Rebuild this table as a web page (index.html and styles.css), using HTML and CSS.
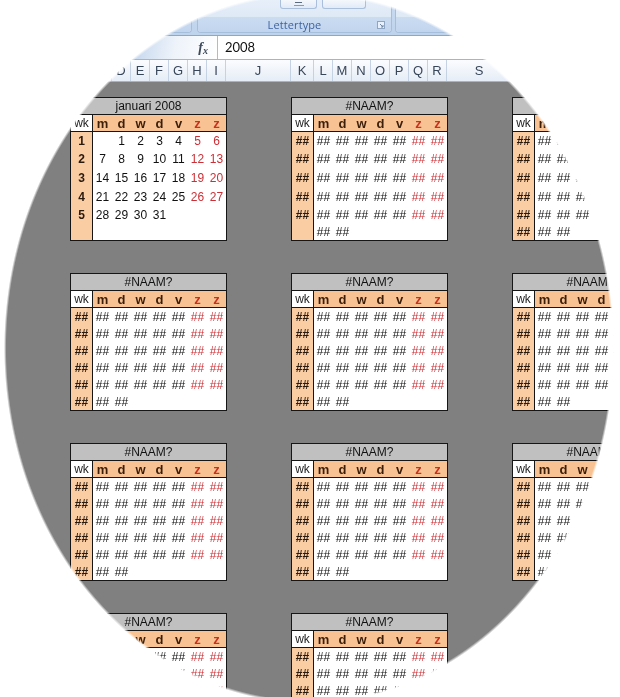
FILE: index.html
```html
<!DOCTYPE html>
<html lang="nl">
<head>
<meta charset="utf-8">
<title>Kalender 2008</title>
<link rel="stylesheet" href="styles.css">
</head>
<body>
<div class="screen">
  <div class="ribbon">
    <div class="group group-left">
      <div class="gcontent"></div>
      <div class="glabel"></div>
    </div>
    <div class="group group-font">
      <div class="gcontent">
        <div class="rbtn rbtn-a">
          <svg width="12" height="6" viewBox="0 0 12 6"><path d="M2 1.5h7" stroke="#5a6b80" stroke-width="1"/><path d="M1 4.5h10" stroke="#8a9bb0" stroke-width="1"/></svg>
        </div>
        <div class="rbtn rbtn-b"></div>
      </div>
      <div class="glabel"><span></span><span class="gname">Lettertype</span><span class="launcher"><svg width="8" height="8" viewBox="0 0 8 8"><rect x="0.5" y="0.5" width="7" height="7" fill="#e9f0f9" stroke="#8ea6c4"/><path d="M3 3l3 3M6 4v2H4" stroke="#6f87a6" fill="none"/></svg></span></div>
    </div>
    <div class="group group-right">
      <div class="gcontent"></div>
      <div class="glabel"></div>
    </div>
  </div>

  <div class="formula-bar">
    <div class="fx-area"><span class="fx">f<span class="fxx">x</span></span></div>
    <div class="formula-input">2008</div>
  </div>

  <div class="col-headers">
    <div class="ch cw-gap">A</div><div class="ch cw-wk">B</div><div class="ch">C</div><div class="ch">D</div><div class="ch">E</div><div class="ch">F</div><div class="ch">G</div><div class="ch">H</div><div class="ch">I</div>
    <div class="ch cw-gap2">J</div><div class="ch cw-wk">K</div><div class="ch">L</div><div class="ch">M</div><div class="ch">N</div><div class="ch">O</div><div class="ch">P</div><div class="ch">Q</div><div class="ch">R</div>
    <div class="ch cw-gap2">S</div><div class="ch cw-wk">T</div><div class="ch">U</div><div class="ch">V</div><div class="ch">W</div><div class="ch">X</div><div class="ch">Y</div>
  </div>

  <div class="sheet">
    <!-- band 1 -->
    <div class="band band-first">
      <div class="cal">
        <div class="cal-title">januari 2008</div>
        <div class="cal-head"><span class="wkh">wk</span><span>m</span><span>d</span><span>w</span><span>d</span><span>v</span><span class="z">z</span><span class="z">z</span></div>
        <div class="cal-body">
          <span class="k">1</span><span></span><span>1</span><span>2</span><span>3</span><span>4</span><span class="z">5</span><span class="z">6</span>
          <span class="k">2</span><span>7</span><span>8</span><span>9</span><span>10</span><span>11</span><span class="z">12</span><span class="z">13</span>
          <span class="k">3</span><span>14</span><span>15</span><span>16</span><span>17</span><span>18</span><span class="z">19</span><span class="z">20</span>
          <span class="k">4</span><span>21</span><span>22</span><span>23</span><span>24</span><span>25</span><span class="z">26</span><span class="z">27</span>
          <span class="k">5</span><span>28</span><span>29</span><span>30</span><span>31</span><span></span><span></span><span></span>
          <span class="k"></span>
        </div>
      </div>
      <div class="cal">
        <div class="cal-title">#NAAM?</div>
        <div class="cal-head"><span class="wkh">wk</span><span>m</span><span>d</span><span>w</span><span>d</span><span>v</span><span class="z">z</span><span class="z">z</span></div>
        <div class="cal-body">
          <span class="k">##</span><span>##</span><span>##</span><span>##</span><span>##</span><span>##</span><span class="z">##</span><span class="z">##</span>
          <span class="k">##</span><span>##</span><span>##</span><span>##</span><span>##</span><span>##</span><span class="z">##</span><span class="z">##</span>
          <span class="k">##</span><span>##</span><span>##</span><span>##</span><span>##</span><span>##</span><span class="z">##</span><span class="z">##</span>
          <span class="k">##</span><span>##</span><span>##</span><span>##</span><span>##</span><span>##</span><span class="z">##</span><span class="z">##</span>
          <span class="k">##</span><span>##</span><span>##</span><span>##</span><span>##</span><span>##</span><span class="z">##</span><span class="z">##</span>
          <span class="k"></span><span>##</span><span>##</span>
        </div>
      </div>
      <div class="cal">
        <div class="cal-title">#NAAM?</div>
        <div class="cal-head"><span class="wkh">wk</span><span>m</span><span>d</span><span>w</span><span>d</span><span>v</span><span class="z">z</span><span class="z">z</span></div>
        <div class="cal-body">
          <span class="k">##</span><span>##</span><span>##</span><span>##</span><span>##</span><span>##</span><span class="z">##</span><span class="z">##</span>
          <span class="k">##</span><span>##</span><span>##</span><span>##</span><span>##</span><span>##</span><span class="z">##</span><span class="z">##</span>
          <span class="k">##</span><span>##</span><span>##</span><span>##</span><span>##</span><span>##</span><span class="z">##</span><span class="z">##</span>
          <span class="k">##</span><span>##</span><span>##</span><span>##</span><span>##</span><span>##</span><span class="z">##</span><span class="z">##</span>
          <span class="k">##</span><span>##</span><span>##</span><span>##</span><span>##</span><span>##</span><span class="z">##</span><span class="z">##</span>
          <span class="k">##</span><span>##</span><span>##</span>
        </div>
      </div>
    </div>

    <!-- band 2 -->
    <div class="band">
      <div class="cal">
        <div class="cal-title">#NAAM?</div>
        <div class="cal-head"><span class="wkh">wk</span><span>m</span><span>d</span><span>w</span><span>d</span><span>v</span><span class="z">z</span><span class="z">z</span></div>
        <div class="cal-body">
          <span class="k">##</span><span>##</span><span>##</span><span>##</span><span>##</span><span>##</span><span class="z">##</span><span class="z">##</span>
          <span class="k">##</span><span>##</span><span>##</span><span>##</span><span>##</span><span>##</span><span class="z">##</span><span class="z">##</span>
          <span class="k">##</span><span>##</span><span>##</span><span>##</span><span>##</span><span>##</span><span class="z">##</span><span class="z">##</span>
          <span class="k">##</span><span>##</span><span>##</span><span>##</span><span>##</span><span>##</span><span class="z">##</span><span class="z">##</span>
          <span class="k">##</span><span>##</span><span>##</span><span>##</span><span>##</span><span>##</span><span class="z">##</span><span class="z">##</span>
          <span class="k">##</span><span>##</span><span>##</span>
        </div>
      </div>
      <div class="cal">
        <div class="cal-title">#NAAM?</div>
        <div class="cal-head"><span class="wkh">wk</span><span>m</span><span>d</span><span>w</span><span>d</span><span>v</span><span class="z">z</span><span class="z">z</span></div>
        <div class="cal-body">
          <span class="k">##</span><span>##</span><span>##</span><span>##</span><span>##</span><span>##</span><span class="z">##</span><span class="z">##</span>
          <span class="k">##</span><span>##</span><span>##</span><span>##</span><span>##</span><span>##</span><span class="z">##</span><span class="z">##</span>
          <span class="k">##</span><span>##</span><span>##</span><span>##</span><span>##</span><span>##</span><span class="z">##</span><span class="z">##</span>
          <span class="k">##</span><span>##</span><span>##</span><span>##</span><span>##</span><span>##</span><span class="z">##</span><span class="z">##</span>
          <span class="k">##</span><span>##</span><span>##</span><span>##</span><span>##</span><span>##</span><span class="z">##</span><span class="z">##</span>
          <span class="k">##</span><span>##</span><span>##</span>
        </div>
      </div>
      <div class="cal">
        <div class="cal-title">#NAAM?</div>
        <div class="cal-head"><span class="wkh">wk</span><span>m</span><span>d</span><span>w</span><span>d</span><span>v</span><span class="z">z</span><span class="z">z</span></div>
        <div class="cal-body">
          <span class="k">##</span><span>##</span><span>##</span><span>##</span><span>##</span><span>##</span><span class="z">##</span><span class="z">##</span>
          <span class="k">##</span><span>##</span><span>##</span><span>##</span><span>##</span><span>##</span><span class="z">##</span><span class="z">##</span>
          <span class="k">##</span><span>##</span><span>##</span><span>##</span><span>##</span><span>##</span><span class="z">##</span><span class="z">##</span>
          <span class="k">##</span><span>##</span><span>##</span><span>##</span><span>##</span><span>##</span><span class="z">##</span><span class="z">##</span>
          <span class="k">##</span><span>##</span><span>##</span><span>##</span><span>##</span><span>##</span><span class="z">##</span><span class="z">##</span>
          <span class="k">##</span><span>##</span><span>##</span>
        </div>
      </div>
    </div>

    <!-- band 3 -->
    <div class="band">
      <div class="cal">
        <div class="cal-title">#NAAM?</div>
        <div class="cal-head"><span class="wkh">wk</span><span>m</span><span>d</span><span>w</span><span>d</span><span>v</span><span class="z">z</span><span class="z">z</span></div>
        <div class="cal-body">
          <span class="k">##</span><span>##</span><span>##</span><span>##</span><span>##</span><span>##</span><span class="z">##</span><span class="z">##</span>
          <span class="k">##</span><span>##</span><span>##</span><span>##</span><span>##</span><span>##</span><span class="z">##</span><span class="z">##</span>
          <span class="k">##</span><span>##</span><span>##</span><span>##</span><span>##</span><span>##</span><span class="z">##</span><span class="z">##</span>
          <span class="k">##</span><span>##</span><span>##</span><span>##</span><span>##</span><span>##</span><span class="z">##</span><span class="z">##</span>
          <span class="k">##</span><span>##</span><span>##</span><span>##</span><span>##</span><span>##</span><span class="z">##</span><span class="z">##</span>
          <span class="k">##</span><span>##</span><span>##</span>
        </div>
      </div>
      <div class="cal">
        <div class="cal-title">#NAAM?</div>
        <div class="cal-head"><span class="wkh">wk</span><span>m</span><span>d</span><span>w</span><span>d</span><span>v</span><span class="z">z</span><span class="z">z</span></div>
        <div class="cal-body">
          <span class="k">##</span><span>##</span><span>##</span><span>##</span><span>##</span><span>##</span><span class="z">##</span><span class="z">##</span>
          <span class="k">##</span><span>##</span><span>##</span><span>##</span><span>##</span><span>##</span><span class="z">##</span><span class="z">##</span>
          <span class="k">##</span><span>##</span><span>##</span><span>##</span><span>##</span><span>##</span><span class="z">##</span><span class="z">##</span>
          <span class="k">##</span><span>##</span><span>##</span><span>##</span><span>##</span><span>##</span><span class="z">##</span><span class="z">##</span>
          <span class="k">##</span><span>##</span><span>##</span><span>##</span><span>##</span><span>##</span><span class="z">##</span><span class="z">##</span>
          <span class="k">##</span><span>##</span><span>##</span>
        </div>
      </div>
      <div class="cal">
        <div class="cal-title">#NAAM?</div>
        <div class="cal-head"><span class="wkh">wk</span><span>m</span><span>d</span><span>w</span><span>d</span><span>v</span><span class="z">z</span><span class="z">z</span></div>
        <div class="cal-body">
          <span class="k">##</span><span>##</span><span>##</span><span>##</span><span>##</span><span>##</span><span class="z">##</span><span class="z">##</span>
          <span class="k">##</span><span>##</span><span>##</span><span>##</span><span>##</span><span>##</span><span class="z">##</span><span class="z">##</span>
          <span class="k">##</span><span>##</span><span>##</span><span>##</span><span>##</span><span>##</span><span class="z">##</span><span class="z">##</span>
          <span class="k">##</span><span>##</span><span>##</span><span>##</span><span>##</span><span>##</span><span class="z">##</span><span class="z">##</span>
          <span class="k">##</span><span>##</span><span>##</span><span>##</span><span>##</span><span>##</span><span class="z">##</span><span class="z">##</span>
          <span class="k">##</span><span>##</span><span>##</span>
        </div>
      </div>
    </div>

    <!-- band 4 -->
    <div class="band">
      <div class="cal">
        <div class="cal-title">#NAAM?</div>
        <div class="cal-head"><span class="wkh">wk</span><span>m</span><span>d</span><span>w</span><span>d</span><span>v</span><span class="z">z</span><span class="z">z</span></div>
        <div class="cal-body">
          <span class="k">##</span><span>##</span><span>##</span><span>##</span><span>##</span><span>##</span><span class="z">##</span><span class="z">##</span>
          <span class="k">##</span><span>##</span><span>##</span><span>##</span><span>##</span><span>##</span><span class="z">##</span><span class="z">##</span>
          <span class="k">##</span><span>##</span><span>##</span><span>##</span><span>##</span><span>##</span><span class="z">##</span><span class="z">##</span>
        </div>
      </div>
      <div class="cal">
        <div class="cal-title">#NAAM?</div>
        <div class="cal-head"><span class="wkh">wk</span><span>m</span><span>d</span><span>w</span><span>d</span><span>v</span><span class="z">z</span><span class="z">z</span></div>
        <div class="cal-body">
          <span class="k">##</span><span>##</span><span>##</span><span>##</span><span>##</span><span>##</span><span class="z">##</span><span class="z">##</span>
          <span class="k">##</span><span>##</span><span>##</span><span>##</span><span>##</span><span>##</span><span class="z">##</span><span class="z">##</span>
          <span class="k">##</span><span>##</span><span>##</span><span>##</span><span>##</span><span>##</span><span class="z">##</span><span class="z">##</span>
        </div>
      </div>
      <div class="cal">
        <div class="cal-title">#NAAM?</div>
        <div class="cal-head"><span class="wkh">wk</span><span>m</span><span>d</span><span>w</span><span>d</span><span>v</span><span class="z">z</span><span class="z">z</span></div>
        <div class="cal-body">
          <span class="k">##</span><span>##</span><span>##</span><span>##</span><span>##</span><span>##</span><span class="z">##</span><span class="z">##</span>
          <span class="k">##</span><span>##</span><span>##</span><span>##</span><span>##</span><span>##</span><span class="z">##</span><span class="z">##</span>
          <span class="k">##</span><span>##</span><span>##</span><span>##</span><span>##</span><span>##</span><span class="z">##</span><span class="z">##</span>
        </div>
      </div>
    </div>
  </div>
</div>
</body>
</html>
```

FILE: styles.css
```css
* { box-sizing: border-box; margin: 0; padding: 0; }

html, body { background: #ffffff; }

body {
  width: 620px;
  height: 697px;
  overflow: hidden;
  font-family: "Liberation Sans", Arial, sans-serif;
}

.screen {
  width: 620px;
  height: 697px;
  overflow: hidden;
  display: flex;
  flex-direction: column;
  background: #808080;
  -webkit-mask-image: radial-gradient(ellipse 305px 355px at 309px 348px, #000 99.2%, transparent 100%);
  mask-image: radial-gradient(ellipse 305px 355px at 309px 348px, #000 99.2%, transparent 100%);
}

/* ---------- ribbon ---------- */
.ribbon {
  flex: none;
  height: 36px;
  display: flex;
  align-items: flex-start;
  background: linear-gradient(#c9dbf1, #bed3ec);
  border-bottom: 1px solid #8fa6c4;
}

.group {
  height: 33px;
  display: flex;
  flex-direction: column;
  border: 1px solid #a5bedc;
  border-top: none;
  border-radius: 0 0 4px 4px;
  background: linear-gradient(#e7eff9, #d7e4f4);
}

.group-left { width: 192px; flex: none; }
.group-font { width: 195px; flex: none; margin-left: 5px; }
.group-right { flex: 1; margin-left: 3px; }

.gcontent {
  flex: 1;
  display: flex;
  align-items: flex-start;
  padding-left: 82px;
}

.rbtn {
  height: 9px;
  border: 1px solid #a9bfdb;
  border-top: none;
  border-radius: 0 0 3px 3px;
  background: linear-gradient(#f4f8fd, #e1eaf6);
  display: flex;
  justify-content: center;
  align-items: center;
}
.rbtn-a { width: 37px; }
.rbtn-b { width: 44px; margin-left: 5px; }

.glabel {
  height: 15px;
  flex: none;
  display: grid;
  grid-template-columns: 1fr auto 1fr;
  align-items: center;
  background: linear-gradient(#cbdcf1, #c1d5ee);
  border-radius: 0 0 3px 3px;
}

.gname {
  font-family: "Open Sans", "Noto Sans", sans-serif;
  font-size: 11px;
  line-height: 15px;
  color: #3e63a0;
  letter-spacing: 0.1px;
}

.launcher {
  justify-self: end;
  margin-right: 6px;
  display: flex;
}

/* ---------- formula bar ---------- */
.formula-bar {
  flex: none;
  height: 24px;
  display: flex;
  background: #ffffff;
  border-bottom: 1px solid #9fb5d0;
}

.fx-area {
  width: 218px;
  flex: none;
  display: flex;
  justify-content: flex-end;
  align-items: center;
  padding-right: 9px;
  background: linear-gradient(100deg, #aac3e4 0%, #c6d8ee 62%, #eef3fa 80%, #ffffff 100%);
  border-right: 1px solid #a9bcd4;
}

.fx {
  font-family: "Liberation Serif", "Times New Roman", serif;
  font-style: italic;
  font-weight: bold;
  font-size: 14px;
  color: #3d4a5c;
}
.fxx { font-size: 10px; position: relative; top: 2px; }

.formula-input {
  padding-left: 7px;
  font-family: Lato, "Open Sans", sans-serif;
  font-size: 13px;
  line-height: 23px;
  color: #111;
}

/* ---------- column headers ---------- */
.col-headers {
  flex: none;
  height: 22px;
  display: flex;
  background: linear-gradient(#fbfcfe, #e6edf6);
  border-bottom: 1px solid #9eb6ce;
}

.ch {
  flex: none;
  width: 19px;
  border-right: 1px solid #c4d2e3;
  text-align: center;
  font-size: 13px;
  line-height: 21px;
  color: #38465a;
}
.ch.cw-gap { width: 70px; }
.ch.cw-gap2 { width: 65px; }
.ch.cw-wk { width: 23px; }

/* ---------- sheet ---------- */
.sheet {
  flex: 1;
  display: flex;
  flex-direction: column;
  gap: 32px;
  padding: 15px 0 0 70px;
  background: #808080;
  overflow: hidden;
}

.band {
  display: flex;
  gap: 64px;
  flex: none;
}

.cal {
  flex: none;
  width: 157px;
  background: #ffffff;
  border: 1px solid #161616;
  font-size: 12px;
  color: #111;
}

.cal-title {
  height: 17px;
  background: #c0c0c0;
  border-bottom: 1px solid #161616;
  text-align: center;
  line-height: 16px;
}

.cal-head,
.cal-body {
  display: grid;
  grid-template-columns: 22px repeat(7, 19px);
}

.cal-head {
  height: 17px;
  border-bottom: 1px solid #161616;
  background: #f9c293;
}

.cal-head span {
  display: flex;
  align-items: center;
  justify-content: center;
  font-weight: bold;
  font-size: 13px;
  color: #3b1f0b;
}
.cal-head span.z { color: #c8321c; }
.cal-head span.wkh {
  background: #ffffff;
  border-right: 1px solid #161616;
  font-weight: normal;
  font-size: 12px;
  color: #222;
}

.cal-body {
  grid-template-rows: repeat(6, 17px);
}
.band-first .cal-body {
  grid-template-rows: 18px 18px 20px 18px 18px 16px;
}

.cal-body span {
  display: flex;
  align-items: center;
  justify-content: center;
}
.cal-body span.z { color: #cc3036; }
.cal-body span.k {
  background: #fbcda3;
  border-right: 1px solid #161616;
  font-weight: bold;
  color: #2a1a0e;
}
```
